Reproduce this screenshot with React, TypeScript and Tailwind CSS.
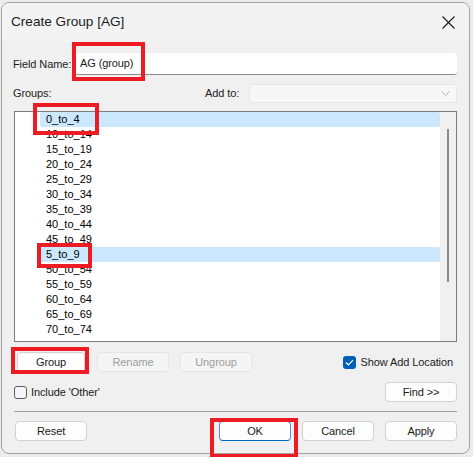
const groups = [
  "0_to_4",
  "10_to_14",
  "15_to_19",
  "20_to_24",
  "25_to_29",
  "30_to_34",
  "35_to_39",
  "40_to_44",
  "45_to_49",
  "5_to_9",
  "50_to_54",
  "55_to_59",
  "60_to_64",
  "65_to_69",
  "70_to_74",
];

const selected = new Set(["0_to_4", "5_to_9"]);

function Btn({
  label,
  disabled,
  primary,
  className = "",
}: {
  label: string;
  disabled?: boolean;
  primary?: boolean;
  className?: string;
}) {
  let tone = "border-[#d1d1d1] bg-[#fdfdfd] text-[#1b1b1b]";
  if (disabled) tone = "border-[#e6e6e6] bg-[#f5f5f5] text-[#9d9d9d]";
  if (primary) tone = "border-[#5a8fcb] border-b-[#0067c0] bg-[#fdfdfd] text-[#1b1b1b]";
  return (
    <div
      className={`flex h-[20px] w-[72px] items-center justify-center rounded-[4px] border text-[11px] ${tone} ${className}`}
    >
      {label}
    </div>
  );
}

function RedBox({ className }: { className: string }) {
  return (
    <div
      aria-hidden
      className={`pointer-events-none absolute border-[4px] border-[#ed1c24] ${className}`}
    />
  );
}

export default function App() {
  return (
    <div
      className="relative h-[457px] w-[473px] overflow-hidden bg-[#ececec] pl-[1px] pt-[2px] text-[#1b1b1b]"
      style={{ fontFamily: '"Liberation Sans", Arial, sans-serif' }}
    >
      <div className="flex h-[452px] w-[469px] flex-col overflow-hidden rounded-[8px] border border-[#a3a3a3] bg-[#f0f0f0]">
        {/* title bar */}
        <div className="flex h-[38px] shrink-0 items-center justify-between bg-[#f3f3f3] pl-[9px] pr-[14px]">
          <span className="text-[13.6px] text-[#1b1b1b]">Create Group [AG]</span>
          <svg width="13" height="13" viewBox="0 0 13 13" className="mt-[1px]">
            <path d="M0.5 0.5 L12.5 12.5 M12.5 0.5 L0.5 12.5" stroke="#1b1b1b" strokeWidth="1.1" />
          </svg>
        </div>

        <div className="flex flex-1 flex-col pl-[11px] pr-[12px] text-[11px] tracking-[-0.1px]">
          {/* field name */}
          <div className="mt-[12px] flex h-[22px] items-center">
            <span className="w-[62px] whitespace-nowrap">Field Name:</span>
            <div className="flex h-[22px] flex-1 items-center rounded-[3px] border-b border-[#8a8a8a] bg-white pl-[5px]">
              AG (group)
            </div>
          </div>

          {/* groups / add to */}
          <div className="mt-[9px] flex h-[19px] items-center">
            <span className="w-[192px]">Groups:</span>
            <span className="w-[44px]">Add to:</span>
            <div className="flex h-[19px] flex-1 items-center justify-end rounded-[3px] border border-[#e6e6e6] bg-[#f7f7f7] pr-[6px]">
              <svg width="9" height="6" viewBox="0 0 9 6">
                <path d="M0.5 0.5 L4.5 4.5 L8.5 0.5" fill="none" stroke="#b5b5b5" strokeWidth="1" />
              </svg>
            </div>
          </div>

          {/* list */}
          <div className="ml-[1px] mt-[8px] flex h-[231px] border border-[#7d7d7d] tracking-normal">
            <div className="flex flex-1 flex-col bg-white">
              {groups.map((g) => (
                <div key={g} className="flex h-[15px] shrink-0">
                  <div
                    className={`ml-[25px] flex flex-1 items-center rounded-[2px] pl-[6px] text-[11px] leading-none text-black ${
                      selected.has(g) ? "bg-[#cce8ff]" : ""
                    }`}
                  >
                    {g}
                  </div>
                </div>
              ))}
            </div>
            <div className="flex w-[16px] justify-center bg-[#f0f0f0] pt-[17px]">
              <div className="h-[153px] w-[2px] bg-[#8a8a8a]" />
            </div>
          </div>

          {/* group buttons */}
          <div className="mt-[10px] flex h-[20px] items-center">
            <Btn label="Group" className="ml-[4px] !w-[68px]" />
            <Btn label="Rename" disabled className="ml-[12px]" />
            <Btn label="Ungroup" disabled className="ml-[11px]" />
            <div className="ml-auto flex items-center pr-[4px]">
              <div className="flex h-[13px] w-[13px] items-center justify-center rounded-[3px] bg-[#005fb8]">
                <svg width="9" height="7" viewBox="0 0 9 7">
                  <path d="M1 3.5 L3.4 5.8 L8 1.2" fill="none" stroke="white" strokeWidth="1.2" />
                </svg>
              </div>
              <span className="ml-[5px]">Show Add Location</span>
            </div>
          </div>

          {/* include other / find */}
          <div className="mt-[10px] flex h-[20px] items-center">
            <div className="ml-[1px] h-[13px] w-[13px] rounded-[3px] border border-[#5c5c5c] bg-[#f6f6f6]" />
            <span className="ml-[4px]">Include 'Other'</span>
            <Btn label="Find >>" className="ml-auto" />
          </div>

          <div className="ml-[1px] mt-[9px] h-px bg-[#a0a0a0]" />

          {/* bottom buttons */}
          <div className="mt-[9px] flex h-[20px] items-center">
            <Btn label="Reset" className="ml-[2px]" />
            <Btn label="OK" primary className="ml-auto" />
            <Btn label="Cancel" className="ml-[11px]" />
            <Btn label="Apply" className="ml-[11px]" />
          </div>
        </div>
      </div>

      <RedBox className="left-[72px] top-[42px] h-[39px] w-[73px]" />
      <RedBox className="left-[33px] top-[103px] h-[32px] w-[66px]" />
      <RedBox className="left-[37px] top-[243px] h-[25px] w-[55px]" />
      <RedBox className="left-[11px] top-[347px] h-[27px] w-[78px]" />
      <RedBox className="left-[210px] top-[418px] h-[40px] w-[88px]" />
    </div>
  );
}
